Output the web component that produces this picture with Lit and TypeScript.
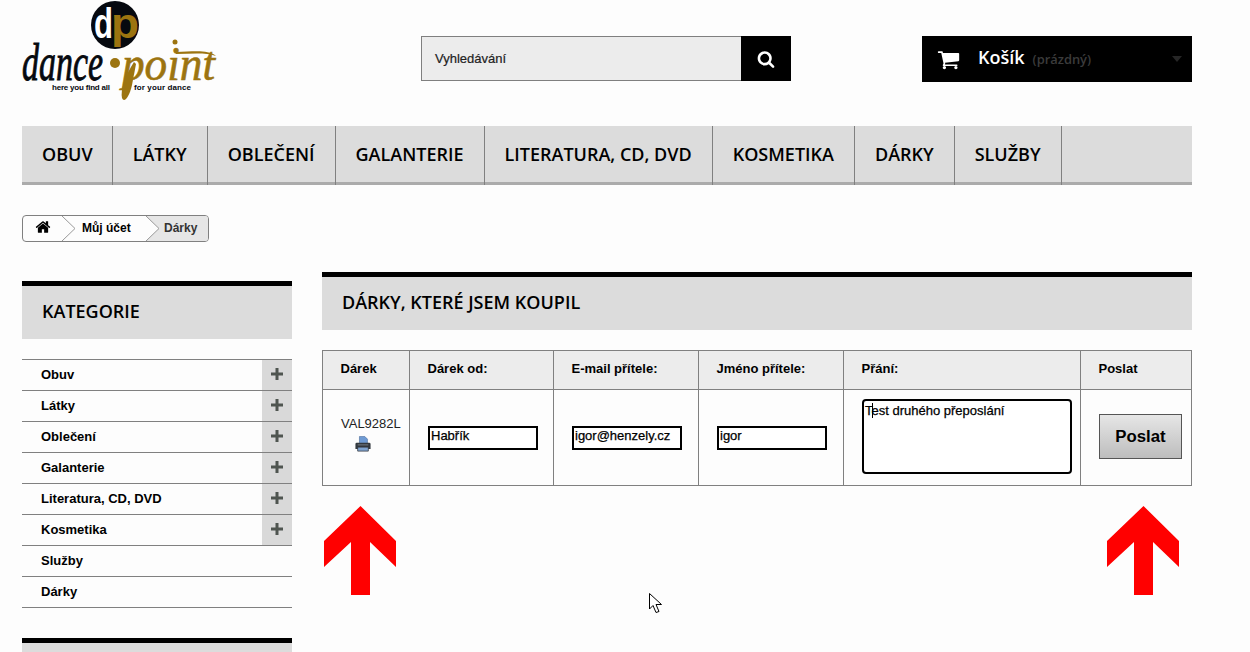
import { LitElement, html, css, svg } from "lit";
import { customElement } from "lit/decorators.js";

const SEARCH = "M1216 832q0-185-131.5-316.5t-316.5-131.5-316.5 131.5-131.5 316.5 131.5 316.5 316.5 131.5 316.5-131.5 131.5-316.5zm512 832q0 52-38 90t-90 38q-54 0-90-38l-343-342q-179 124-399 124-143 0-273.5-55.5t-225-150-150-225-55.5-273.5 55.5-273.5 150-225 225-150 273.5-55.5 273.5 55.5 225 150 150 225 55.5 273.5q0 220-124 399l343 343q37 37 37 90z";
const CART = "M704 1536q0 52-38 90t-90 38-90-38-38-90 38-90 90-38 90 38 38 90zm896 0q0 52-38 90t-90 38-90-38-38-90 38-90 90-38 90 38 38 90zm128-1088v512q0 24-16.5 42.5t-40.5 21.5l-1044 122q13 60 13 70 0 16-24 64h920q26 0 45 19t19 45-19 45-45 19h-1024q-26 0-45-19t-19-45q0-11 8-31.5t16-36 21.5-40 15.5-29.5l-177-823h-204q-26 0-45-19t-19-45 19-45 45-19h256q16 0 28.5 6.5t19.5 15.5 13 24.5 8 26 5.5 29.5 4.5 26h1201q26 0 45 19t19 45z";
const HOME = "M1472 992v480q0 26-19 45t-45 19h-384v-384h-256v384h-384q-26 0-45-19t-19-45v-480q0-1 .5-3t.5-3l575-474 575 474q1 2 1 6zm223-69l-62 74q-8 9-21 11h-3q-13 0-21-7l-692-577-692 577q-12 8-24 7-13-2-21-11l-62-74q-8-10-7-23.5t11-21.5l719-599q32-26 76-26t76 26l244 204v-195q0-14 9-23t23-9h192q14 0 23 9t9 23v408l219 182q10 8 11 21.5t-7 23.5z";

const NAV = ["OBUV", "LÁTKY", "OBLEČENÍ", "GALANTERIE", "LITERATURA, CD, DVD", "KOSMETIKA", "DÁRKY", "SLUŽBY"];
const CATS: [string, boolean][] = [
  ["Obuv", true], ["Látky", true], ["Oblečení", true], ["Galanterie", true],
  ["Literatura, CD, DVD", true], ["Kosmetika", true], ["Služby", false], ["Dárky", false],
];

const ARROW = "36.5,0 72,35 72,61 46,36 46,89 27,89 27,36 0,61 0,35";

@customElement("app-root")
export class AppRoot extends LitElement {
  static styles = css`
    :host { display: block; height: 652px; overflow: hidden; position: relative; background: #fdfdfd; color: #000; font-family: "Liberation Sans", Arial, sans-serif; font-size: 13px; }
    .page { width: 1170px; margin-left: 22px; }
    svg { display: block; }

    .header { height: 126px; display: flex; align-items: flex-start; }
    .logo { width: 399px; height: 104px; flex: none; }
    .logo svg { overflow: visible; }
    .lg-black { fill: #06090f; }
    .lg-white { fill: #fff; }
    .lg-gold { fill: #9c7410; }
    .lg-script { font-family: "Liberation Serif", serif; font-style: italic; font-size: 52px; stroke: #06090f; stroke-width: .9px; }
    .lg-point { font-family: "Liberation Serif", serif; font-style: italic; font-size: 48px; stroke: #9c7410; stroke-width: .6px; }
    .lg-dp { font-family: "Liberation Sans", sans-serif; font-weight: 700; font-size: 42px; }
    .lg-tag { font-family: "Liberation Sans", sans-serif; font-weight: 700; font-size: 8px; }

    .search { margin-top: 36px; width: 370px; height: 45px; display: flex; flex: none; }
    .search-box { flex: 1; box-sizing: border-box; border: 1px solid #7f7f7f; border-right: 0; background: #ececec; padding: 0 13px; display: flex; align-items: center; color: #222; -webkit-text-stroke: .2px #222; }
    .search-btn { width: 50px; background: #000; display: flex; align-items: center; justify-content: center; }
    .search-btn svg { width: 18px; height: 18px; fill: #fff; }

    .cart { margin-top: 36px; margin-left: 131px; width: 270px; height: 46px; background: #000; display: flex; align-items: center; flex: none; box-sizing: border-box; padding-left: 15px; position: relative; }
    .cart svg { width: 23px; height: 23px; fill: #fff; margin-right: 18px; }
    .cart-title { font-family: "Open Sans", sans-serif; font-weight: 600; font-size: 18px; color: #fff; margin-right: 8px; margin-top: -4px; }
    .cart-empty { font-family: "Open Sans", sans-serif; font-weight: 600; font-size: 12.9px; color: #3b3b3b; }
    .cart-caret { margin-left: auto; margin-right: 10px; width: 0; height: 0; border-left: 5.5px solid transparent; border-right: 5.5px solid transparent; border-top: 6px solid #262626; }

    .nav { height: 59px; box-sizing: border-box; background: #dcdcdc; border-bottom: 3px solid #ababab; display: flex; }
    .nav-item { padding: 0 20px 3px; border-right: 1px solid #808080; margin-bottom: -3px; display: flex; align-items: center; font-family: "Open Sans", sans-serif; font-weight: 600; font-size: 18px; color: #000; white-space: nowrap; box-sizing: border-box; }
    .nav-item:first-child { padding-right: 19px; }

    .crumbs { margin-top: 30px; height: 27px; width: 187px; box-sizing: border-box; border: 1px solid #808080; border-radius: 4px; display: flex; align-items: center; font-weight: 700; font-size: 12px; overflow: hidden; }
    .crumb-home { width: 39px; padding-left: 12px; padding-bottom: 4px; box-sizing: border-box; }
    .crumb-home svg { width: 16px; height: 16px; fill: #000; }
    .sep { flex: none; width: 14px; height: 25px; }
    .sep polyline { fill: none; stroke: #999; stroke-width: 1; }
    .crumb-mid { padding: 0 14px 2px 6px; width: 70px; box-sizing: border-box; white-space: nowrap; }
    .crumb-last { flex: 1; align-self: stretch; display: flex; align-items: center; padding: 0 0 2px 4px; background: #e6e6e6; color: #333; }
    .sep-fill polygon { fill: #e6e6e6; }

    .cols { margin-top: 30px; display: flex; gap: 30px; align-items: flex-start; }
    .side { width: 270px; flex: none; padding-top: 9px; }
    .main { flex: 1; min-width: 0; }
    .title { height: 58px; box-sizing: border-box; border-top: 5px solid #000; background: #dcdcdc; padding: 0 0 4px 20px; display: flex; align-items: center; font-family: "Open Sans", sans-serif; font-weight: 600; font-size: 18px; color: #000; }

    .cats { list-style: none; margin: 20px 0 30px; padding: 0; border-top: 1px solid #808080; }
    .cats li { height: 31px; box-sizing: border-box; border-bottom: 1px solid #808080; display: flex; align-items: center; justify-content: space-between; padding-left: 19px; font-weight: 700; }
    .cat-name { margin-top: -2px; }
    .plus { width: 30px; align-self: stretch; background: #d9d9d9; display: flex; align-items: center; justify-content: center; }
    .plus svg { width: 12px; height: 12px; fill: #4f5550; margin-top: -2px; }

    table { margin-top: 20px; width: 869px; table-layout: fixed; border-collapse: collapse; }
    th, td { border: 1px solid #808080; padding: 0 0 0 17.5px; text-align: left; vertical-align: middle; box-sizing: border-box; }
    th { height: 39px; background: #ececec; font-weight: 700; font-size: 13px; padding-bottom: 3px; }
    td { height: 96px; }
    .code { color: #222; padding-left: 18px; padding-bottom: 7px; }
    .code svg { width: 16px; height: 16px; margin: 5px 0 0 14px; }
    .field { display: block; width: 110px; height: 24px; box-sizing: border-box; border: 2px solid #000; background: #fff; padding: 0 1px 5px; font: 400 13px "Liberation Sans", Arial, sans-serif; color: #000; outline: none; -webkit-text-stroke: .25px #000; }
    .msg-cell { padding-left: 18px; }
    .msg-wrap { position: relative; width: 210px; height: 75px; margin-top: -2px; }
    .msg { display: block; width: 210px; height: 75px; box-sizing: border-box; border: 2px solid #000; border-radius: 4px; background: #fff; padding: 2px 1px; font: 400 13px "Liberation Sans", Arial, sans-serif; color: #000; resize: none; outline: none; overflow: hidden; -webkit-text-stroke: .25px #000; }
    .caret { position: absolute; left: 10px; top: 4px; width: 1px; height: 15px; background: #000; }
    .send { display: block; width: 83px; height: 45px; margin-top: -2px; box-sizing: border-box; border: 1px solid #555; background: linear-gradient(#e6e6e6, #bdbdbd); font: 700 16.8px "Liberation Sans", Arial, sans-serif; color: #000; padding: 0; }

    .arrow { position: absolute; width: 72px; height: 89px; top: 506px; }
    .arrow polygon { fill: #f00; }
    .arrow-l { left: 324px; }
    .arrow-r { left: 1107px; }
    .pointer { position: absolute; left: 649px; top: 593px; width: 14px; height: 21px; }
    .pointer path { fill: #fff; stroke: #000; stroke-width: 1; }
  `;

  private logo() {
    return html`<svg width="220" height="104" viewBox="0 0 220 104">
      ${svg`
        <circle class="lg-black" cx="93" cy="25" r="24"></circle>
        <text class="lg-white lg-dp" x="72" y="38" textLength="19" lengthAdjust="spacingAndGlyphs">d</text>
        <text class="lg-gold lg-dp" x="89" y="38" textLength="28" lengthAdjust="spacingAndGlyphs">p</text>
        <circle class="lg-gold" cx="93" cy="63" r="5"></circle>
        <circle class="lg-gold" cx="153" cy="42" r="2.5"></circle>
        <text class="lg-black lg-script" x="0" y="80" textLength="81" lengthAdjust="spacingAndGlyphs">dance</text>
        <text class="lg-gold lg-point" x="100" y="80" textLength="93" lengthAdjust="spacingAndGlyphs">point</text>
        <path class="lg-gold" d="M112 62 C104 74 98 90 100 98 C102 103 107 98 110 85 L114 64 Z"></path>
        <path class="lg-gold" d="M154 52 C170 52 185 49 194 56 C183 52 168 54 154 54 Z"></path>
        <text class="lg-black lg-tag" x="30" y="90" textLength="58" lengthAdjust="spacing">here you find all</text>
        <text class="lg-black lg-tag" x="112" y="90" textLength="57" lengthAdjust="spacing">for your dance</text>
      `}
    </svg>`;
  }

  private plus() {
    return html`<span class="plus"><svg viewBox="0 0 12 12"><path d="M4.500 0h3v4.500h4.500v3h-4.500v4.500h-3v-4.500h-4.500v-3h4.500z"></path></svg></span>`;
  }

  private printer() {
    return html`<svg viewBox="0 0 18 17">
      <path d="M5 0h6l3 3v5H5z" fill="#6f9bd4" stroke="#3d5f8f" stroke-width=".6"></path>
      <path d="M2 7h14a1.500 1.500 0 0 1 1.500 1.500V14H.5V8.500A1.500 1.500 0 0 1 2 7z" fill="#33393f"></path>
      <path d="M3 12h12v4.500H3z" fill="#7fa3cf" stroke="#2b3036" stroke-width=".8"></path>
      <path d="M3 9h12v1H3z" fill="#7b838c"></path>
    </svg>`;
  }

  render() {
    return html`
      <div class="page">
        <header class="header">
          <div class="logo">${this.logo()}</div>
          <div class="search">
            <div class="search-box">Vyhledávání</div>
            <div class="search-btn"><svg viewBox="0 0 1792 1792"><path d=${SEARCH}></path></svg></div>
          </div>
          <div class="cart">
            <svg viewBox="0 0 1792 1792"><path d=${CART}></path></svg>
            <span class="cart-title">Košík</span>
            <span class="cart-empty">(prázdný)</span>
            <span class="cart-caret"></span>
          </div>
        </header>

        <nav class="nav">${NAV.map((n) => html`<div class="nav-item">${n}</div>`)}</nav>

        <div class="crumbs">
          <div class="crumb-home"><svg viewBox="0 0 1792 1792"><path d=${HOME}></path></svg></div>
          <svg class="sep" viewBox="0 0 14 25"><polyline points="0,0 13,12.500 0,25"></polyline></svg>
          <div class="crumb-mid">Můj účet</div>
          <svg class="sep sep-fill" viewBox="0 0 14 25"><polygon points="0,0 14,0 14,25 0,25 13,12.500"></polygon><polyline points="0,0 13,12.500 0,25"></polyline></svg>
          <div class="crumb-last">Dárky</div>
        </div>

        <div class="cols">
          <aside class="side">
            <div class="title">KATEGORIE</div>
            <ul class="cats">
              ${CATS.map(([c, p]) => html`<li><span class="cat-name">${c}</span>${p ? this.plus() : ""}</li>`)}
            </ul>
            <div class="title"></div>
          </aside>
          <main class="main">
            <div class="title">DÁRKY, KTERÉ JSEM KOUPIL</div>
            <table>
              <colgroup><col style="width:87px" /><col style="width:144px" /><col style="width:145px" /><col style="width:145px" /><col style="width:237px" /><col style="width:111px" /></colgroup>
              <thead>
                <tr><th>Dárek</th><th>Dárek od:</th><th>E-mail přítele:</th><th>Jméno přítele:</th><th>Přání:</th><th>Poslat</th></tr>
              </thead>
              <tbody>
                <tr>
                  <td class="code">VAL9282L${this.printer()}</td>
                  <td class="msg-cell"><input class="field" .value=${"Habřík"} /></td>
                  <td class="msg-cell"><input class="field" .value=${"igor@henzely.cz"} /></td>
                  <td class="msg-cell"><input class="field" .value=${"igor"} /></td>
                  <td class="msg-cell">
                    <div class="msg-wrap">
                      <textarea class="msg" .value=${"Test druhého přeposlání"}></textarea>
                      <span class="caret"></span>
                    </div>
                  </td>
                  <td class="msg-cell"><button class="send">Poslat</button></td>
                </tr>
              </tbody>
            </table>
          </main>
        </div>
      </div>

      <svg class="arrow arrow-l" viewBox="0 0 72 89"><polygon points=${ARROW}></polygon></svg>
      <svg class="arrow arrow-r" viewBox="0 0 72 89"><polygon points=${ARROW}></polygon></svg>
      <svg class="pointer" viewBox="0 0 14 21"><path d="M.5 .5V16L4 12.500 7 19.500 10 18.500 7 11.500H12.500Z"></path></svg>
    `;
  }
}
